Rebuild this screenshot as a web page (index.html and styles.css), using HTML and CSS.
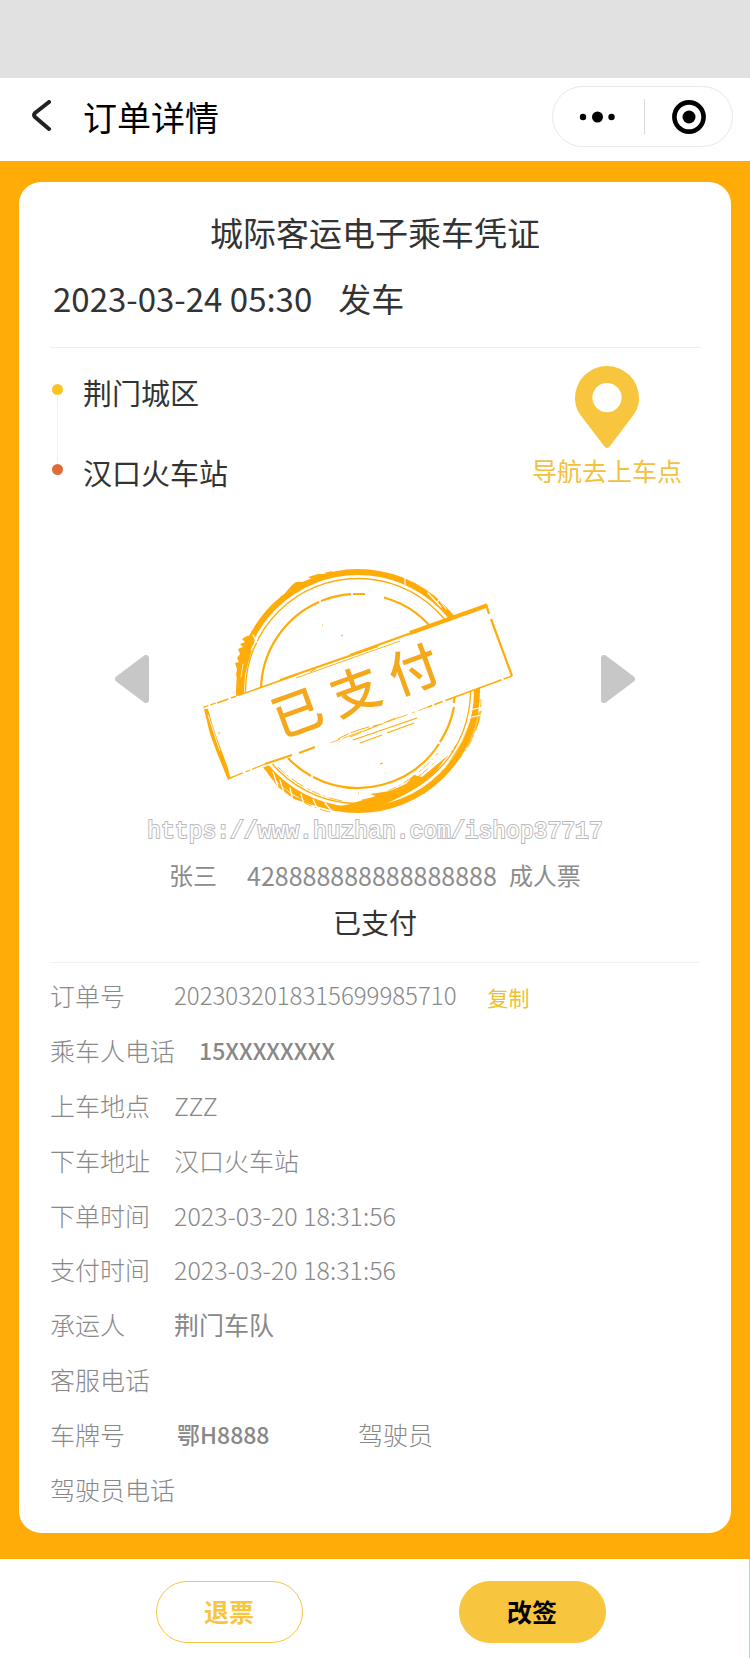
FILE: index.html
```html
<!DOCTYPE html>
<html lang="zh-CN">
<head>
  <meta charset="UTF-8">
  <meta name="viewport" content="width=device-width, initial-scale=1.0">
  <title>订单详情</title>
  <link rel="stylesheet" href="styles.css">
</head>
<body>
  <div class="status-bar"></div>

  <header class="nav-bar">
    <button class="back-btn" aria-label="返回">
      <svg width="20" height="34" viewBox="0 0 20 34">
        <path d="M18 2 L4 13 Q2 15 4 17 L18 29" fill="none" stroke="#222" stroke-width="4" stroke-linecap="round" stroke-linejoin="round"/>
      </svg>
    </button>
    <h1 class="nav-title">订单详情</h1>
    <div class="capsule">
      <button class="capsule-btn more-btn" aria-label="更多">
        <svg width="36" height="12" viewBox="0 0 36 12">
          <circle cx="4" cy="6" r="3.2"/>
          <circle cx="18.5" cy="6" r="5.5"/>
          <circle cx="32.5" cy="6" r="3.2"/>
        </svg>
      </button>
      <button class="capsule-btn" aria-label="关闭">
        <svg width="34" height="34" viewBox="0 0 34 34">
          <circle cx="17" cy="17" r="14.6" fill="none" stroke="#000" stroke-width="4.6"/>
          <circle cx="17" cy="17" r="6.5"/>
        </svg>
      </button>
    </div>
  </header>

  <main class="page">
    <section class="ticket">
      <div class="ticket-head">
        <h2 class="ticket-title">城际客运电子乘车凭证</h2>
        <p class="depart"><span>2023-03-24 05:30</span><span>发车</span></p>
      </div>

      <div class="route">
        <ul class="stations">
          <li class="station start">荆门城区</li>
          <li class="station end">汉口火车站</li>
        </ul>
        <a class="navigate" href="#">
          <svg width="64" height="84" viewBox="0 0 64 84">
            <path fill="#f7c63e" fill-rule="evenodd" d="M32 0 A32 32 0 0 0 0 32 C0 40 3 46 7 51 L29 80 Q32 84 35 80 L57 51 C61 46 64 40 64 32 A32 32 0 0 0 32 0 Z M32 17 A14.6 14.6 0 1 1 32 46.2 A14.6 14.6 0 1 1 32 17 Z"/>
          </svg>
          <span>导航去上车点</span>
        </a>
      </div>

      <div class="stamp-row">
        <button class="arrow-btn" aria-label="上一张">
          <svg width="34" height="48" viewBox="0 0 34 48">
            <path d="M31 3 V45 L3 24 Z" fill="#c7c7c7" stroke="#c7c7c7" stroke-width="6" stroke-linejoin="round"/>
          </svg>
        </button>

        <svg class="stamp" width="350" height="276" viewBox="0 -24 350 276">
          <!-- rings -->
          <g fill="none" stroke="#ffac09">
            <circle cx="158" cy="126" r="119" stroke-width="6"/>
            <circle cx="158" cy="126" r="112.5" stroke-width="1.3"/>
            <!-- inner ring, broken at the top -->
            <path d="M61 126 A97 97 0 0 1 119 37 M121 36 A97 97 0 0 1 151 29.2 M153 29 L165 29 M184 32.5 A97 97 0 0 1 254 138 M254 142 A97 97 0 0 1 240 177 M239 179 A97 97 0 0 1 113 212 M111 211 A97 97 0 0 1 86 191" stroke-width="2.2"/>
          </g>
          <!-- worn, heavier parts of the rim -->
          <g fill="#ffac09">
            <path d="M132 6 L124 8 L130 9 L118 9 L108 12 L112 14 L102 17 L96 17 L92 20 L86 27 L84 31 L76 38 L82 36 L98 26 L116 17 L134 11 Z"/>
            <path d="M56 62 L51 67 L53 70 L47 71 L42 74 L45 77 L40 79 L43 82 L38 84 L40 89 L37 93 L39 97 L35 98 L37 104 L36 110 L38 116 L36 129 L44 128 L45 110 L50 91 L54 80 Z"/>
            <path d="M246 192 L236 207 L222 218 L206 229 L184 240 L160 246 L130 243 L150 239 L176 231 L170 229 L190 226 L206 219 L214 210 L222 212 Z"/>
            <path d="M282 145 L279 158 L270 178 L252 203 L246 202 L262 176 L272 152 Z" opacity="0.7"/>
            <path d="M66 200 L75 216 L92 230 L110 238 L134 245 L112 240 L94 234 L78 222 L68 209 Z"/>
          </g>
          <g fill="none" stroke="#ffac09" stroke-width="0.9" stroke-dasharray="9 3 2 4 14 5 3 2">
            <path d="M72 210 Q92 238 130 247"/>
            <path d="M78 202 Q104 228 142 236"/>
            <path d="M162 235 Q204 228 234 198"/>
            <path d="M188 226 Q216 214 238 188"/>
            <path d="M281 134 Q281 168 259 194"/>
            <path d="M186 231 Q232 215 256 180"/>
          </g>
          <!-- scratches -->
          <g fill="none" stroke="#fff" stroke-width="1.2" stroke-linecap="round">
            <path d="M73 207 L78 222 M80 215 L84 228 M90 223 L93 236 M101 229 L104 240 M113 234 L117 243 M125 238 L131 245"/>
            <path d="M53 70 L58 79 M51 85 L57 74 M205 11 L205 22 M228 28 L241 42 M234 27 L246 44 M237 37 L243 31"/>
            <path d="M270 145 L283 142 M268 153 L281 150"/>
            <path d="M41 112 L43 99 M61 215 L96 244" stroke-width="0.7"/>
          </g>
          <!-- ribbon -->
          <path d="M4 143 L287 39 L312 111 L29 215 Z" fill="#fff"/>
          <g fill="none" stroke="#ffac09">
            <path d="M16 138 L4 142 L9 156" stroke-width="1.2" stroke-dasharray="6 2"/>
            <path d="M17 138 L96 110" stroke-width="1.5" stroke-dasharray="12 3 5 2 80"/>
            <path d="M80 115 L178 81" stroke-width="2"/>
            <path d="M96 113 L200 76" stroke-width="0.9"/>
            <path d="M150 90 L228 62" stroke-width="2"/>
            <path d="M210 68 L287 40.5" stroke-width="4"/>
            <path d="M286 39 L289 49 M291 54 L312 111" stroke-width="2.2"/>
            <path d="M312 111 L228 142" stroke-width="1.6" stroke-dasharray="9 2 60 3"/>
            <path d="M228 142 L130 178" stroke-width="0.8" stroke-dasharray="10 4 3 5 22 3"/>
            <path d="M115 182 L99 188 M92 190 L65 199" stroke-width="2"/>
            <path d="M65 199 L30 213" stroke-width="1.2" stroke-dasharray="14 2 5 3"/>
            <path d="M153 175 L217 153 M160 178 L182 170 M187 168 L214 158" stroke-width="1.2"/>
            <path d="M138 174 Q156 164 178 160 M150 172 L198 152" stroke-width="1" stroke-dasharray="12 2 20 3"/>
          </g>
          <path d="M4 144 L8 144 L14 165 L28 203 L30 212 L36 211 L28 215 L17 188 L10 169 Z" fill="#ffac09"/>
          <path d="M8 150 L20 186" stroke="#fff" stroke-width="0.8"/>
          <path d="M110 107 l6 -3 M18 168 l2 0 M141 71 l2 -1 M180 199 l3 -1 M158 228 l1 0 M122 60 l1 0" stroke="#ffac09" stroke-width="1"/>
          <text class="stamp-text" transform="translate(97 147) rotate(-20)" x="0 62 124" y="19" text-anchor="middle">已支付</text>
        </svg>

        <button class="arrow-btn" aria-label="下一张">
          <svg width="34" height="48" viewBox="0 0 34 48">
            <path d="M3 3 V45 L31 24 Z" fill="#c7c7c7" stroke="#c7c7c7" stroke-width="6" stroke-linejoin="round"/>
          </svg>
        </button>
      </div>

      <p class="watermark">https://www.huzhan.com/ishop37717</p>

      <p class="passenger">
        <span class="name">张三</span>
        <span class="id-no">428888888888888888</span>
        <span>成人票</span>
      </p>
      <p class="pay-status">已支付</p>

      <dl class="details">
        <div class="row">
          <dt>订单号</dt>
          <dd class="order-no">2023032018315699985710</dd>
          <dd><button class="copy-btn">复制</button></dd>
        </div>
        <div class="row">
          <dt>乘车人电话</dt>
          <dd class="strong">15XXXXXXXX</dd>
        </div>
        <div class="row">
          <dt>上车地点</dt>
          <dd>ZZZ</dd>
        </div>
        <div class="row">
          <dt>下车地址</dt>
          <dd>汉口火车站</dd>
        </div>
        <div class="row">
          <dt>下单时间</dt>
          <dd>2023-03-20 18:31:56</dd>
        </div>
        <div class="row">
          <dt>支付时间</dt>
          <dd>2023-03-20 18:31:56</dd>
        </div>
        <div class="row">
          <dt>承运人</dt>
          <dd class="carrier">荆门车队</dd>
        </div>
        <div class="row">
          <dt>客服电话</dt>
          <dd></dd>
        </div>
        <div class="row">
          <dt>车牌号</dt>
          <dd class="strong plate">鄂H8888</dd>
          <dt>驾驶员</dt>
          <dd></dd>
        </div>
        <div class="row">
          <dt>驾驶员电话</dt>
          <dd></dd>
        </div>
      </dl>
    </section>
  </main>

  <footer class="actions">
    <button class="action-btn refund">退票</button>
    <button class="action-btn change">改签</button>
  </footer>
</body>
</html>
```
FILE: styles.css
```css
* {
  box-sizing: border-box;
  margin: 0;
  padding: 0;
}

body {
  min-height: 100vh;
  display: flex;
  flex-direction: column;
  background-color: #ffac09;
  color: #333;
  font-family: "Noto Sans CJK SC", sans-serif;
}

button {
  background: none;
  border: none;
  font-family: inherit;
  cursor: pointer;
}

svg {
  display: block;
}

.status-bar {
  height: 78px;
  background-color: #e1e1e1;
}

/* Header */
.nav-bar {
  display: flex;
  align-items: center;
  padding: 8px 17px 14px 31px;
  background-color: #fff;
}

.nav-title {
  flex: 1;
  margin-left: 32px;
  font-size: 34px;
  font-weight: 400;
  line-height: 60px;
  color: #000;
}

.capsule {
  display: flex;
  align-items: center;
  width: 181px;
  height: 61px;
  border: 1px solid #e8e8ee;
  border-radius: 31px;
}

.capsule-btn {
  flex: 1;
  height: 35px;
  display: flex;
  align-items: center;
  justify-content: center;
}

.more-btn {
  padding-right: 4px;
  border-right: 1px solid #d8d8d8;
}

/* Ticket */
.page {
  flex: 1;
  display: flex;
  padding: 21px 19px 26px;
}

.ticket {
  flex: 1;
  display: flex;
  flex-direction: column;
  padding: 17px 31px;
  background-color: #fff;
  border-radius: 22px;
}

.ticket-head {
  padding-bottom: 16px;
  border-bottom: 1px solid #eee;
}

.ticket-title {
  font-size: 33px;
  font-weight: 400;
  line-height: 66px;
  text-align: center;
}

.depart {
  display: flex;
  gap: 26px;
  padding-left: 3px;
  font-size: 33px;
  line-height: 66px;
}

.route {
  display: flex;
  justify-content: space-between;
  padding: 18px 18px 0 2px;
}

.stations {
  position: relative;
  display: flex;
  flex-direction: column;
  gap: 36px;
  padding-top: 4px;
  list-style: none;
}

/* line between the two stops */
.stations::before {
  content: "";
  position: absolute;
  top: 28px;
  left: 5px;
  width: 1px;
  height: 68px;
  background-color: #eee;
}

.station {
  display: flex;
  align-items: center;
  gap: 20px;
  font-size: 29px;
  line-height: 44px;
}

.station::before {
  content: "";
  width: 11px;
  height: 11px;
  margin-bottom: 6px;
  border-radius: 50%;
}

.start::before {
  background-color: #f9c421;
}

.end::before {
  background-color: #e16a35;
}

.navigate {
  display: flex;
  flex-direction: column;
  align-items: center;
  gap: 2px;
  font-size: 25px;
  line-height: 36px;
  color: #f4c040;
  text-decoration: none;
}

.stamp-row {
  display: flex;
  align-items: center;
  justify-content: space-between;
  margin-top: 47px;
  padding: 0 65px;
}

.stamp-text {
  font-size: 50px;
  font-weight: 500;
  fill: #f5a81c;
}

/* outlined text with a white inside */
.watermark {
  font-family: "Liberation Mono", monospace;
  font-size: 23px;
  line-height: 30px;
  text-align: center;
  color: #fff;
  -webkit-text-stroke: 2px #bbb;
  paint-order: stroke fill;
}

.passenger {
  display: flex;
  justify-content: center;
  gap: 12px;
  padding-top: 10px;
  font-size: 24px;
  line-height: 36px;
  color: #8c8c8c;
}

.name {
  margin-right: 18px;
}

.id-no {
  font-size: 25px;
}

.pay-status {
  padding: 9px 0 20px;
  border-bottom: 1px solid #f0f0f0;
  font-size: 28px;
  line-height: 40px;
  text-align: center;
}

/* Order details */
.details {
  flex: 1;
  display: grid;
  grid-auto-rows: 1fr;
  padding-top: 5px;
  font-size: 25px;
  font-weight: 300;
  line-height: 36px;
  color: #888;
}

.row {
  display: flex;
  align-items: center;
  gap: 24px;
}

.row dt:first-child {
  min-width: 100px;
}

.row .order-no {
  font-size: 24px;
}

.row .strong {
  font-size: 23px;
  font-weight: 500;
}

.row .carrier {
  font-weight: 400;
}

.plate {
  min-width: 160px;
  padding-left: 3px;
}

.copy-btn {
  padding: 0 7px;
  font-size: 21px;
  color: #edc02f;
}

/* Bottom bar */
.actions {
  display: flex;
  justify-content: center;
  gap: 156px;
  padding: 22px 0 15px 12px;
  background-color: #fff;
  border-right: 1px solid #fbc65a;
}

.action-btn {
  width: 147px;
  height: 62px;
  padding-bottom: 2px;
  border: 1px solid #f7c63e;
  border-radius: 31px;
  font-size: 25px;
  font-weight: 700;
}

.refund {
  color: #f7c63e;
}

.change {
  background-color: #f7c63e;
  color: #000;
}
```
